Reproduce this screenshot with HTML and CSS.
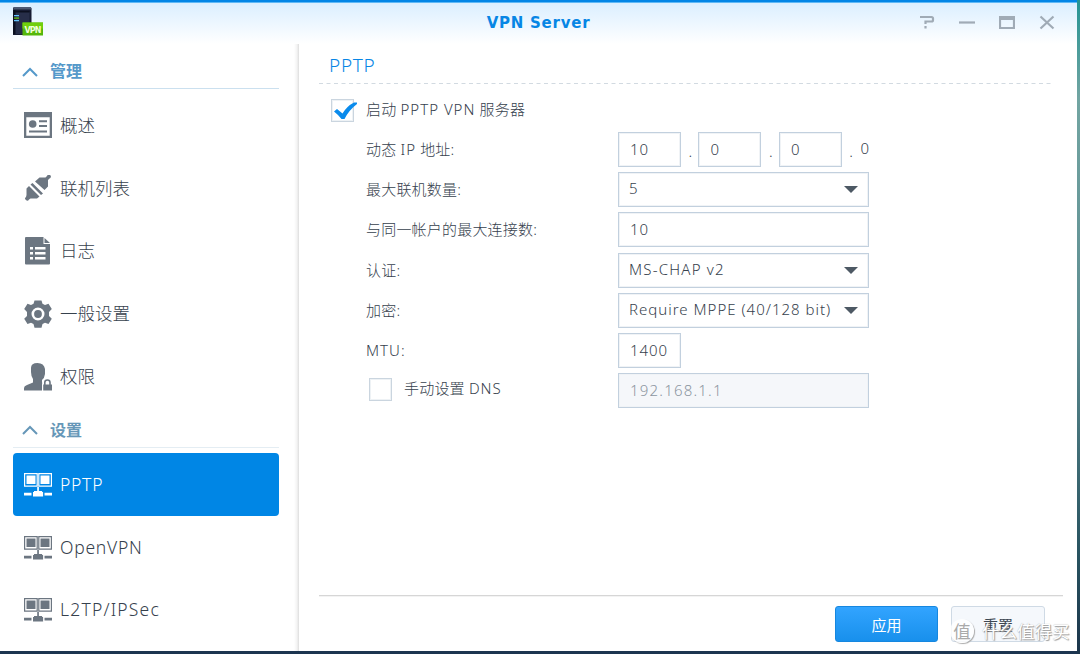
FILE: index.html
```
<!DOCTYPE html>
<html lang="zh-CN">
<head>
<meta charset="utf-8">
<title>VPN Server</title>
<link rel="stylesheet" href="styles.css">
</head>
<body>
<svg width="0" height="0" class="defs">
  <symbol id="network" viewBox="0 0 28 24">
    <path fill="none" stroke="currentColor" stroke-width="1.2" d="M.6.6h12.6v12.6H.6zM14.8.6h12.6v12.6H14.8z"/>
    <path fill="currentColor" d="M2.500 2.500h9v8.500h-9zM16.500 2.500h9v8.500h-9zM13.200 14h1.700v4h3.200v1h1v4.500H9V19h1v-1h3.200zM0 19.800h7.500v2.600H0zM20.500 19.800H28v2.600h-7.500z"/>
  </symbol>
</svg>
<div class="window">
  <header class="titlebar">
    <svg class="logo" width="32" height="30" viewBox="0 0 32 30">
      <path fill="#171c32" d="M1 1 2 0h16l1.500 1v27H1z"/>
      <path fill="#4d5872" d="M2 0h16.500l1 2.500H1z"/>
      <path fill="#272e49" d="M2.500 5h15v22h-15z"/>
      <path fill="#0c1020" d="M1 3h2.500v24H1zM3.500 4h14v1.500h-14z"/>
      <path fill="#65c3ff" d="M2 8h5v1.200H2zM2 13h5v1.200H2z"/>
      <path fill="#70d214" d="M2 10.500h5v1.200H2z"/>
      <path fill="#54b70b" d="M10.500 15.500h20.500v13H10.500z"/>
      <path fill="#70cf0c" d="M10.500 15.500h20.500v6H10.500z"/>
      <text x="21" y="25.500" text-anchor="middle" textLength="17" class="logo-text">VPN</text>
    </svg>
    <h1 class="title">VPN Server</h1>
    <div class="controls">
      <svg width="16" height="16" viewBox="0 0 16 16"><path d="M1 3h11.500q1.500 0 1.500 1.500v1.500q0 1.500-1.500 1.500H6.500V10"/><path d="M6.500 12v2.500"/></svg>
      <svg width="16" height="16" viewBox="0 0 16 16"><path d="M0 8.500h16"/></svg>
      <svg width="16" height="16" viewBox="0 0 16 16"><path d="M1 3h14v11H1zM1 5h14"/></svg>
      <svg width="16" height="16" viewBox="0 0 16 16"><path d="M1.500 2.500l13 12M14.500 2.500l-13 12"/></svg>
    </div>
  </header>
  <div class="body">
    <nav class="sidebar">
      <h2 class="group"><svg width="16" height="10" viewBox="0 0 16 10"><path d="M1 9l7-7 7 7"/></svg><span>管理</span></h2>
      <ul class="menu">
        <li class="item"><svg width="28" height="26" viewBox="0 0 28 26"><path fill="currentColor" fill-rule="evenodd" d="M0 0h28v26H0zM2.300 5.200v18.500h23.400V5.200z"/><circle cx="8.700" cy="12" r="3.800" fill="currentColor"/><path fill="currentColor" d="M15 8.200h8v2h-8zM15 13h8v2h-8zM5 18.500h18v2H5z"/></svg><span>概述</span></li>
        <li class="item"><svg width="28" height="26" viewBox="0 0 28 26"><path fill="currentColor" d="M2.500 13.500 5 11 15.500 21.500 13 23.500H6.500L5 24.500a2 2 0 1 1-3-2.500l.5-2zM6.500 9.500 8.500 8 19 18.500l-2 1.500zM11 6.500 15.500 2.500H21.500l1.500-1.500A2 2 0 1 1 25.500 3.500L24 5v6.500L20.500 15z"/></svg><span>联机列表</span></li>
        <li class="item"><svg width="28" height="28" viewBox="0 0 28 28"><path fill="currentColor" d="M2 0H19.500v7H26v19.500q0 1-1 1H2q-1 0-1-1V1q0-1 1-1zM20.500 1l5.500 5h-5.500z"/><path fill="#fff" d="M6 10h3v2.400H6zM11 10h10.500v2.400H11zM6 15h3v2.400H6zM11 15h10.500v2.400H11zM6 20h3v2.400H6zM11 20h10.500v2.400H11z"/></svg><span>日志</span></li>
        <li class="item"><svg width="28" height="28" viewBox="-14 -14 28 28"><path fill="currentColor" fill-rule="evenodd" d="M-3.500-13.500h7l1 3.200 2.500 1.200 3.500-1.200 3.300 5.300-2.800 3v4l2.800 2.800-3.300 5.200-3.500-1.200-2.500 1.200-1 3.700h-7l-1-3.700-2.500-1.200-3.500 1.200-3.300-5.200L-11 2v-4l-2.800-3 3.300-5.300 3.500 1.200 2.500-1.200zM0-6.500a6.500 6.500 0 1 0 0 13a6.500 6.500 0 1 0 0-13z"/><circle r="3.900" fill="currentColor"/></svg><span>一般设置</span></li>
        <li class="item"><svg width="28" height="28" viewBox="0 0 28 28"><path fill="currentColor" d="M7 5Q7 0 13.500 0T21 6v5q-.5 4-3 6v3q4-2 5-2v2q-4 0-4 3v4.500H0V25q0-2 3-3l6-2.500V16Q7 13 7 9z"/><path fill="#fff" d="M18 28v-7q1-6 5-6.500t5 4V28z"/><path fill="none" stroke="currentColor" stroke-width="1.600" d="M20.800 22v-2.500q0-2.500 2.600-2.500t2.600 2.500V22"/><path fill="currentColor" d="M19.200 21.500H28v6h-8.800z"/></svg><span>权限</span></li>
      </ul>
      <h2 class="group second"><svg width="16" height="10" viewBox="0 0 16 10"><path d="M1 9l7-7 7 7"/></svg><span>设置</span></h2>
      <ul class="menu">
        <li class="item active"><svg width="28" height="24"><use href="#network"/></svg><span class="wide">PPTP</span></li>
        <li class="item"><svg width="28" height="24"><use href="#network"/></svg><span class="wide">OpenVPN</span></li>
        <li class="item"><svg width="28" height="24"><use href="#network"/></svg><span class="ipsec">L2TP/IPSec</span></li>
      </ul>
    </nav>
    <main class="panel">
      <h2 class="panel-title"><span>PPTP</span></h2>
      <svg class="dashes" width="732" height="2"><path d="M0 .5h732"/></svg>
      <div class="form">
        <label class="enable"><span class="check"><svg width="26" height="22" viewBox="0 0 26 22"><path fill="#0a8bec" d="M2 11.500 5 9l5.500 4.500Q15 6 22 2.500h3v1.500Q17 10 12.500 19h-3Q6.500 15 2 11.500z"/></svg></span><span class="label">启动 <span class="latin">PPTP VPN</span> 服务器</span></label>
        <div class="row"><span class="label">动态 <span class="latin">IP</span> 地址:</span><div class="ip"><span class="field short">10</span><i>.</i><span class="field short">0</span><i>.</i><span class="field short">0</span><i class="last">.</i><b>0</b></div></div>
        <div class="row"><span class="label">最大联机数量:</span><span class="field select">5</span></div>
        <div class="row"><span class="label">与同一帐户的最大连接数:</span><span class="field">10</span></div>
        <div class="row"><span class="label">认证:</span><span class="field select chap">MS-CHAP v2</span></div>
        <div class="row"><span class="label">加密:</span><span class="field select mppe">Require MPPE (40/128 bit)</span></div>
        <div class="row"><span class="label latin">MTU:</span><span class="field short">1400</span></div>
        <div class="row"><label class="dns"><span class="check"></span><span class="label">手动设置 <span class="latin">DNS</span></span></label><span class="field disabled">192.168.1.1</span></div>
      </div>
      <footer class="footer">
        <button class="button primary">应用</button>
        <button class="button">重置</button>
        <div class="watermark"><span class="seal">值</span><span>什么值得买</span></div>
      </footer>
    </main>
  </div>
</div>
</body>
</html>
```
FILE: styles.css
```
* { box-sizing: border-box; }
body {
  margin: 0;
  width: 1080px;
  height: 654px;
  overflow: hidden;
  padding: 0 3px 3px 0;
  background: linear-gradient(#249494, #72a5a2 15%, #5f8e92 50%, #285360 85%, #1c354b);
  font-family: "Noto Sans", "Noto Sans CJK SC", sans-serif;
  font-weight: 300;
  color: #36414d;
}
.defs { position: absolute; }
h1, h2, ul { margin: 0; padding: 0; font-weight: inherit; list-style: none; }
.window {
  display: flex;
  flex-direction: column;
  width: 1077px;
  height: 651px;
  background: #fff;
  box-shadow: 0 3px #1c3550;
}
.titlebar {
  display: grid;
  grid-template-columns: 150px 1fr 150px;
  height: 44px;
  border-top: 2px solid #0285e6;
  box-shadow: inset 0 1px #5fb8f6;
  background: linear-gradient(#daeeff, #fff);
}
.logo { margin: 5px 0 0 12px; }
.logo-text { font: bold 8px "DejaVu Sans", sans-serif; fill: #efffd9; }
.title {
  font: bold 15px/43px "DejaVu Sans", sans-serif;
  letter-spacing: .75px;
  color: #0786e5;
  text-align: center;
}
.controls { display: flex; gap: 24px; padding: 12px 0 0 8px; margin-left: -16px; }
.controls svg { flex: none; fill: none; stroke: #a0abb6; stroke-width: 2.2; }
.body { display: flex; flex: 1; min-height: 0; }
.sidebar {
  width: 299px;
  padding: 11px 20px 0 12.5px;
  background: linear-gradient(to left, #ddd, #f3f3f3 2px, #fff 5px);
}
.group {
  display: flex;
  align-items: center;
  gap: 12px;
  width: 266.5px;
  height: 34px;
  padding-left: 9.5px;
  border-bottom: 1px solid #cbe0ef;
  font-size: 16px;
  font-weight: 700;
  line-height: 33px;
  color: #5599ca;
}
.group svg { fill: none; stroke: currentColor; stroke-width: 2; }
.group.second { margin-top: 5px; height: 35.5px; border-color: #e4edf3; color: #6697b8; }
.menu { padding-top: 5px; }
.item {
  display: flex;
  align-items: center;
  gap: 8.5px;
  width: 266.5px;
  height: 62.8px;
  padding-left: 11px;
  border-radius: 4px;
  font-size: 17.5px;
}
.item span { position: relative; top: -1px; }
.item svg { flex: none; color: #6c7681; }
.active { background: #0086e5; color: #fff; }
.active svg { color: #fff; }
.wide { letter-spacing: .75px; }
.ipsec { letter-spacing: 1.2px; }
.panel { display: flex; flex-direction: column; flex: 1; padding: 0 14px 0 20px; }
.panel-title { padding: 8px 0 0 10px; height: 38px; font-size: 19px; line-height: 26px; letter-spacing: .7px; color: #0786e5; }
.dashes { margin-top: 1px; flex: none; }
.dashes path { stroke: #d2dae1; stroke-width: 1; stroke-dasharray: 4 3.5; }
.form { padding-left: 12px; font-size: 15px; }
.enable, .dns { display: flex; align-items: center; }
.enable { height: 47px; padding-top: 4px; }
.check { width: 23px; height: 23px; flex: none; border: 1px solid #cad5df; background: #fff; box-shadow: inset 0 0 0 1px #eef2f5; }
.check svg { display: block; }
.enable .label { margin: -4px 0 0 12px; }
.label { white-space: nowrap; letter-spacing: .2px; }
.latin { letter-spacing: 1px; }
.row { display: grid; grid-template-columns: 252px 251px; height: 40.2px; padding-left: 35px; }
.row > .label { line-height: 34px; }
.field {
  display: block;
  height: 35px;
  padding-left: 11px;
  border: 1px solid #c2d0de;
  box-shadow: inset 0 0 0 1px #f0f3f6;
  line-height: 33px;
  font-size: 15px;
  letter-spacing: .9px;
  white-space: nowrap;
}
.short { width: 63px; }
.select { display: flex; justify-content: space-between; padding: 0 10px 0 10px; line-height: 31px; }
.select::after {
  content: "";
  align-self: center;
  border: 7px solid transparent;
  border-top-color: #4d5964;
  border-bottom: 0;
}
.chap { letter-spacing: 1.2px; }
.mppe { letter-spacing: 1px; }
.disabled { color: #8b95a0; background: #f5f7fa; letter-spacing: 1.2px; }
.ip { display: flex; }
.ip i, .ip b { font-style: normal; font-weight: 300; }
.ip i { width: 17.5px; padding-left: 1px; text-align: center; line-height: 38px; }
.ip b { margin-left: 1px; line-height: 33px; }
.dns { height: 33px; padding-left: 3px; }
.dns .label { margin: -4px 0 0 12px; }
.footer { position: relative; display: flex; gap: 13px; height: 56px; margin-top: auto; padding: 10px 0 0 516px; border-top: 1px solid #d6d6d6; box-shadow: inset 0 1px #f3f3f3; }
.button {
  width: 94px;
  height: 36px;
  padding: 1px 0 0;
  border: 1px solid #cfdae5;
  border-radius: 3px;
  background: #f5f8fc;
  font: inherit;
  font-size: 15px;
  font-weight: 400;
  color: #3d4752;
}
.primary { width: 103px; border-color: #1687df; background: linear-gradient(#32a4ff, #1890ec); color: #fff; }
.watermark {
  position: absolute;
  left: 631px;
  top: 22px;
  display: flex;
  align-items: center;
  gap: 8px;
  font: 17.5px/26px "Noto Sans CJK SC", sans-serif;
  color: #fff;
  text-shadow: 1px 1px 1px #999, 0 0 1px #aaa;
  white-space: nowrap;
}
.seal { width: 24px; height: 24px; border-radius: 50%; background: #fffc; box-shadow: 1px 1px 1px #aaa; color: #aaa; text-shadow: none; text-align: center; line-height: 23px; }
```
